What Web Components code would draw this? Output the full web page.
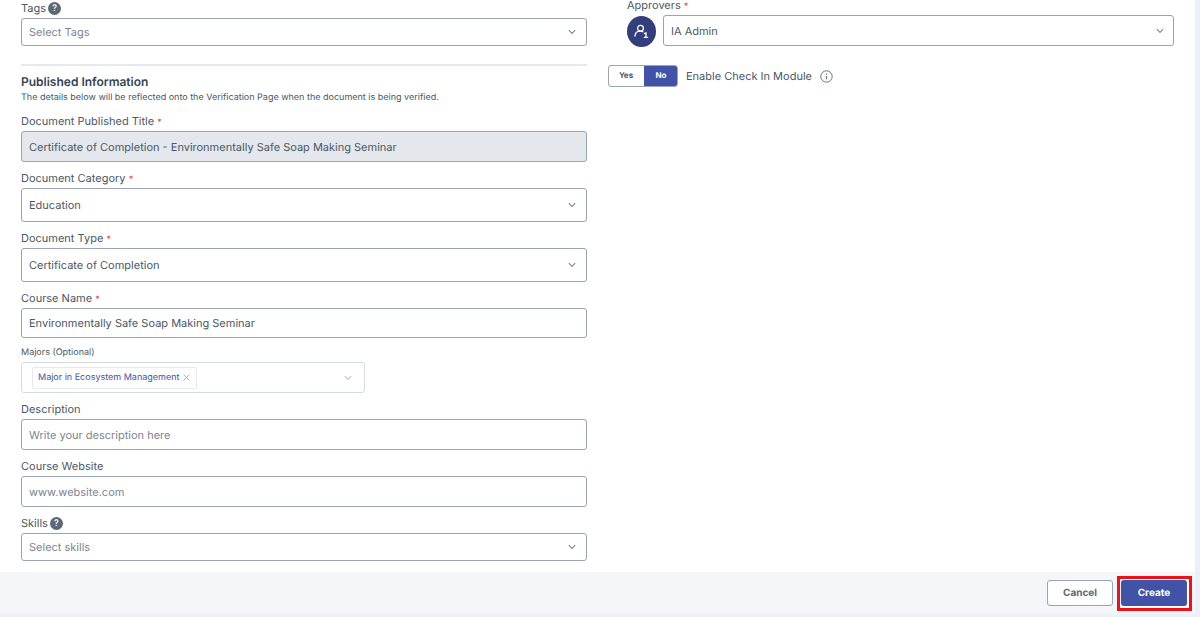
<!DOCTYPE html>
<html lang="en">
<head>
<meta charset="utf-8">
<title>Create document</title>
<style>
  body { margin: 0; background: #edf0f6; font-family: Inter, "Liberation Sans", sans-serif; font-size: 11px; color: #4b5866; text-rendering: geometricPrecision; }
</style>
</head>
<body>
<document-page></document-page>
<script>
const base = `
  *, *::before, *::after { box-sizing: border-box; }
  input, select, button { font: inherit; color: inherit; margin: 0; text-rendering: inherit; }
  svg { display: block; }
  .box { display: block; width: 100%; border: 1px solid #9aa4b2; border-radius: 3px; background: #fff; padding: 0 7px; outline: 0; }
`;
const chevron = `<svg width="8" height="6" viewBox="0 0 8 6" fill="none" stroke="currentColor" stroke-width="1.1" aria-hidden="true"><path d="M.8 1.2 4 4.4 7.2 1.2"/></svg>`;

function define(name, render) {
  customElements.define(name, class extends HTMLElement {
    connectedCallback() {
      if (this.shadowRoot) return;
      const root = this.attachShadow({ mode: 'open' });
      const template = document.createElement('template');
      template.innerHTML = render(this);
      root.append(template.content.cloneNode(true));
    }
  });
}

define('help-dot', () => `
  <style>${base}
    :host { display: block; }
    button { display: grid; place-items: center; width: 13px; height: 13px; padding: 0; border: 0; border-radius: 50%; background: #5b6876; color: #fff; font-size: 9px; line-height: 13px; font-weight: 500; }
  </style>
  <button type="button" aria-label="Help">?</button>`);

const labelRow = el => `
  <div class="caption"><label for="control">${el.getAttribute('label')}${el.hasAttribute('required') ? ' <span>*</span>' : ''}</label>${el.hasAttribute('help') ? '<help-dot></help-dot>' : ''}</div>`;
const fieldStyle = `${base}
  :host { display: block; --height: 31px; }
  :host([size="small"]) { --height: 28px; }
  :host([size="compact"]) { --height: 30px; }
  :host([size="large"]) { --height: 34px; }
  .caption { display: flex; align-items: center; gap: 2px; height: 16px; line-height: 16px; margin-bottom: 2px; }
  .caption span { color: #e5484d; font-size: 9px; line-height: 1; }
  .box { height: var(--height); }
`;

define('text-field', el => `
  <style>${fieldStyle}
    input::placeholder { color: #7c8592; opacity: 1; }
    input:read-only { background: #e4e7eb; }
  </style>
  ${labelRow(el)}
  <input class="box" id="control" type="text" value="${el.getAttribute('value') || ''}" placeholder="${el.getAttribute('placeholder') || ''}" ${el.hasAttribute('readonly') ? 'readonly' : ''}>`);

define('select-field', el => `
  <style>${fieldStyle}
    .wrap { display: grid; align-items: center; }
    .wrap > * { grid-area: 1 / 1; }
    select { appearance: none; }
    :host([empty]) select { color: #7c8592; }
    svg { justify-self: end; margin-right: 11px; color: #7d8796; pointer-events: none; }
  </style>
  ${labelRow(el)}
  <div class="wrap"><select class="box" id="control"><option>${el.getAttribute('value')}</option></select>${chevron}</div>`);

define('tag-field', () => `
  <style>${base}
    :host { display: block; }
    label { display: block; font-size: 9px; line-height: 14px; margin-bottom: 2px; }
    .box { display: flex; align-items: center; width: 344px; max-width: 100%; height: 31px; padding: 0 12px 0 10px; border-color: #d5dbe3; color: #bcc4cf; }
    .chip { display: flex; align-items: center; gap: 4px; height: 22px; padding: 0 6px 0 5px; border: 1px solid #e6e9ef; border-radius: 2px; color: #4153a6; font-size: 9px; white-space: nowrap; }
    .chip button { padding: 0; border: 0; background: none; color: #aeb6c2; }
    input { flex: 1; min-width: 0; border: 0; outline: 0; background: none; }
  </style>
  <label for="control">Majors (Optional)</label>
  <div class="box">
    <span class="chip">Major in Ecosystem Management
      <button type="button" aria-label="Remove"><svg width="7" height="7" viewBox="0 0 7 7" stroke="currentColor" stroke-width="1"><path d="M.5.5l6 6M6.5.5l-6 6"/></svg></button>
    </span>
    <input id="control" type="text" role="combobox" aria-expanded="false">
    ${chevron}
  </div>`);

define('section-heading', () => `
  <style>${base}
    :host { display: block; border-top: 2px solid #e6e8ee; padding-top: 8px; }
    h2 { margin: 0; font-size: 12px; line-height: 16px; font-weight: 600; color: #374453; }
    p { margin: 0; font-size: 9px; line-height: 15px; }
  </style>
  <h2><slot name="title"></slot></h2><p><slot></slot></p>`);

define('approver-field', () => `
  <style>${base}
    :host { display: block; padding-left: 19px; }
    label { display: block; height: 10px; line-height: 10px; margin-bottom: 5px; }
    label span { color: #e5484d; font-size: 9px; line-height: 1; }
    .row { display: flex; align-items: flex-start; gap: 7px; }
    .avatar { flex: none; width: 29px; height: 31px; border-radius: 50%; background: #333f7c; display: grid; place-items: center; margin-top: 1px; }
    .wrap { flex: 1; display: grid; align-items: center; }
    .wrap > * { grid-area: 1 / 1; }
    select { appearance: none; height: 31px; }
    .wrap svg { justify-self: end; margin-right: 10px; color: #7d8796; pointer-events: none; }
  </style>
  <label for="control">Approvers <span>*</span></label>
  <div class="row">
    <span class="avatar"><svg width="15" height="15" viewBox="0 0 15 15" fill="none" stroke="#fff" stroke-width="1.3" stroke-linecap="round" stroke-linejoin="round" aria-hidden="true"><circle cx="6.5" cy="4.2" r="2.9"/><path d="M1 12C1.2 9 3.2 7.1 6.2 7.1c1 0 1.9.2 2.6.7M10.5 9.6l1.5-.9v4.6M10.4 13.4h3.2"/></svg></span>
    <div class="wrap"><select class="box" id="control"><option>IA Admin</option></select>${chevron}</div>
  </div>`);

define('check-in-toggle', () => `
  <style>${base}
    :host { display: flex; align-items: center; gap: 8px; }
    .switch { display: grid; grid-template-columns: 36px 34px; height: 22px; border: 1px solid #9aa4b2; border-radius: 3px; overflow: hidden; width: 70px; background: #fff; }
    button { padding: 0 2px 2px 0; border: 0; background: none; font-size: 8px; font-weight: 700; }
    button[aria-pressed="true"] { background: #4153a6; color: #fff; margin: -1px; }
  </style>
  <div class="switch" role="group" aria-labelledby="name"><button type="button" aria-pressed="false">Yes</button><button type="button" aria-pressed="true">No</button></div>
  <span id="name">Enable Check In Module</span>
  <svg width="13" height="13" viewBox="0 0 13 13" fill="none" stroke="#667382" aria-hidden="true"><circle cx="6.5" cy="6.5" r="5.7"/><path d="M6.5 6v3.3M6.5 3.6v1.2" stroke-width="1.2"/></svg>`);

define('action-bar', () => `
  <style>${base}
    :host { display: flex; justify-content: flex-end; align-items: flex-start; gap: 4px; padding: 4px 3px 3px; background: #f4f6fa; }
    button { display: block; width: 66px; height: 26px; padding: 0 0 1px; border-radius: 3px; font-size: 10px; font-weight: 700; }
    .cancel { margin-top: 4px; border: 1px solid #9aa4b2; background: #fff; color: #5d6977; }
    .create { border: 0; background: #4153a6; color: #fff; }
    .highlight { border: 3px solid #ec1218; padding: 1px 2px 2px 1px; background: #fff; }
  </style>
  <button class="cancel" type="button">Cancel</button>
  <div class="highlight"><button class="create" type="submit">Create</button></div>`);

define('document-page', () => `
  <style>${base}
    :host { display: block; padding-right: 5px; }
    main { display: grid; grid-template-columns: minmax(0, 1fr) minmax(0, 1fr); gap: 21px; padding: 0 21px 11px; background: #fff; }
    .fields { display: flex; flex-direction: column; gap: 8px; }
    section-heading { margin-top: 10px; }
    .settings { display: flex; flex-direction: column; gap: 18px; }
  </style>
  <main>
    <div class="fields">
      <select-field label="Tags" help size="small" value="Select Tags" empty></select-field>
      <section-heading><span slot="title">Published Information</span>The details below will be reflected onto the Verification Page when the document is being verified.</section-heading>
      <text-field label="Document Published Title" required readonly value="Certificate of Completion - Environmentally Safe Soap Making Seminar"></text-field>
      <select-field label="Document Category" required size="large" value="Education"></select-field>
      <select-field label="Document Type" required size="large" value="Certificate of Completion"></select-field>
      <text-field label="Course Name" required size="compact" value="Environmentally Safe Soap Making Seminar"></text-field>
      <tag-field></tag-field>
      <text-field label="Description" placeholder="Write your description here"></text-field>
      <text-field label="Course Website" placeholder="www.website.com"></text-field>
      <select-field label="Skills" help size="small" value="Select skills" empty></select-field>
    </div>
    <div class="settings">
      <approver-field></approver-field>
      <check-in-toggle></check-in-toggle>
    </div>
  </main>
  <action-bar></action-bar>`);
</script>
</body>
</html>
